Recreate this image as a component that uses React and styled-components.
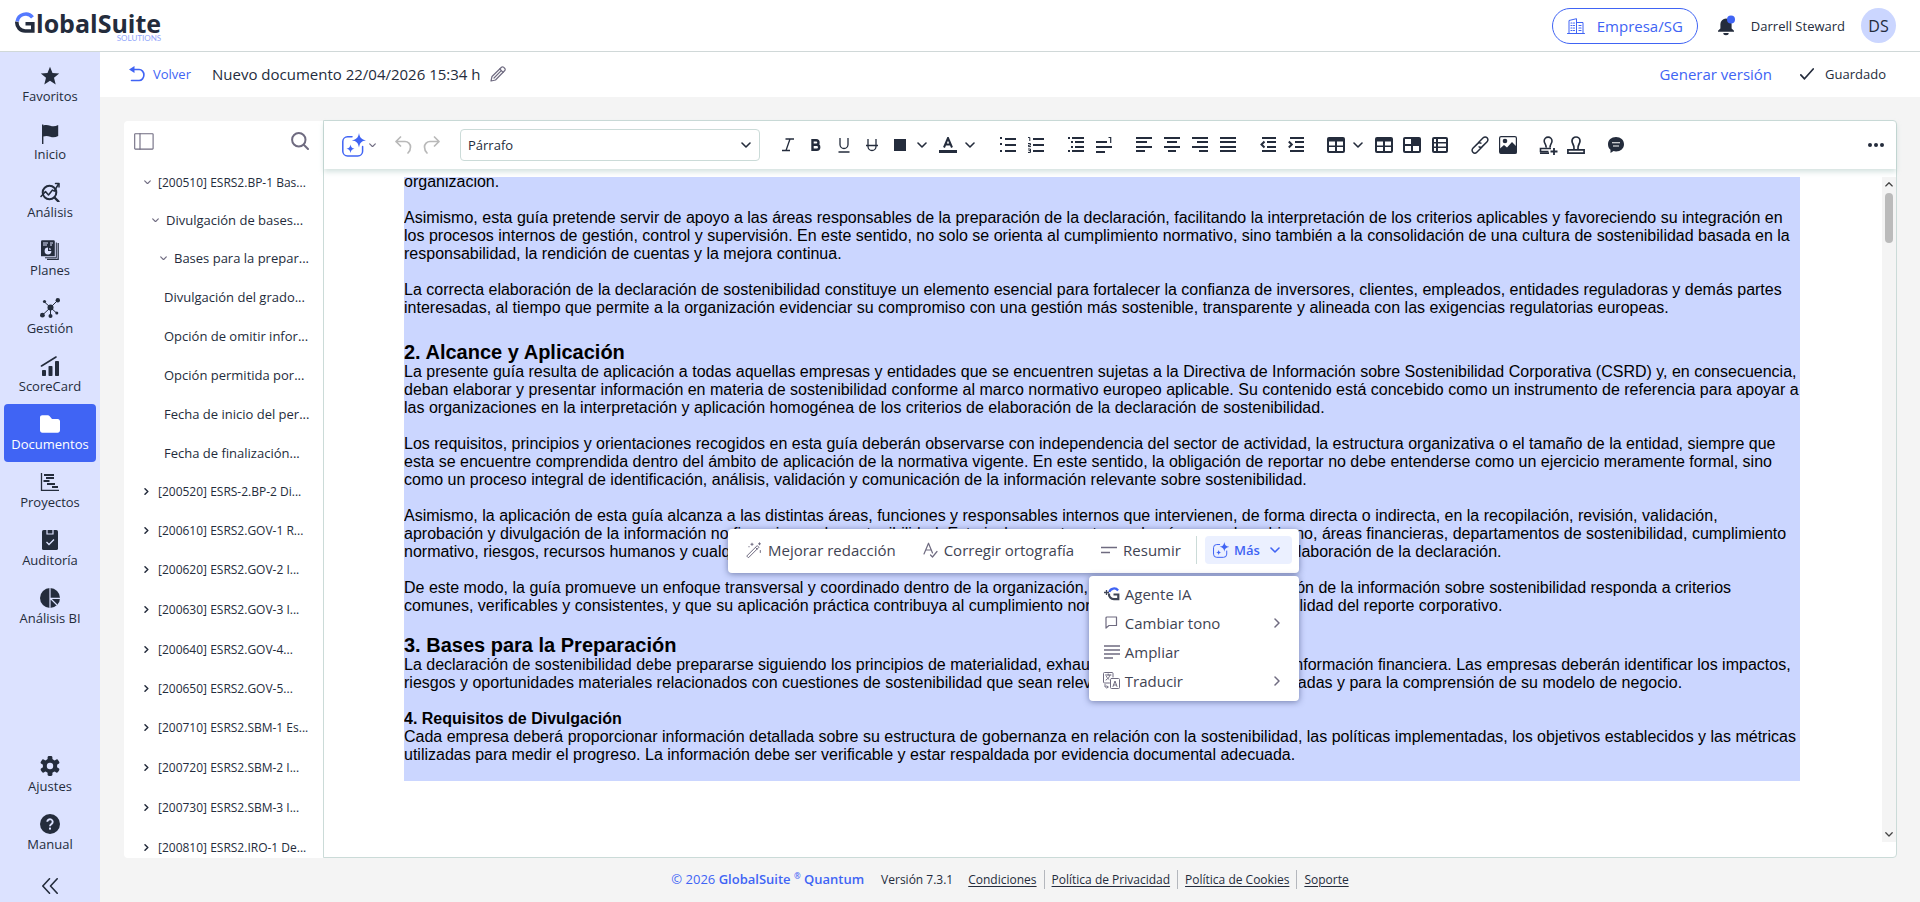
import React from "react";
import styled, { createGlobalStyle, css } from "styled-components";

const ink = "#242c3c";
const blue = "#4064f4";
const muted = "#6f6b80";
const line = "#cbdbd8";

const GlobalStyle = createGlobalStyle`
  * {
    box-sizing: border-box;
  }
  body {
    margin: 0;
    font-family: "Open Sans", sans-serif;
    font-size: 13px;
    color: ${ink};
    background: #f4f4f4;
  }
  button, select {
    font: inherit;
    color: inherit;
    margin: 0;
    padding: 0;
    border: 0;
    background: none;
    cursor: pointer;
  }
  a {
    color: inherit;
    text-decoration: none;
  }
  svg {
    display: block;
    flex: none;
  }
`;

// every glyph: [width, height, drawing]
const bars = (list, h = 2) =>
  list.map(([x, y, w]) => (
    <rect key={`${x}-${y}`} x={x} y={y} width={w} height={h} fill="currentColor" />
  ));

const stroke = {
  fill: "none",
  stroke: "currentColor",
  strokeLinecap: "round",
  strokeLinejoin: "round"
};

const glyphs = {
  star: [
    20,
    20,
    <path
      fill="currentColor"
      d="M10 .8l2.500 6.300 6.700.4-5.200 4.300 1.700 6.600L10 14.800l-5.700 3.600L6 11.800.8 7.500l6.700-.4z"
    />
  ],
  flag: [
    20,
    20,
    <path
      fill="currentColor"
      d="M2 .4h1.400v1c2.200-.8 4.400-.6 6.800.3 2.500.9 5 .9 8-.6v11c-3 1.500-5.500 1.500-8 .6-2.400-.9-4.600-1-6.800-.2v7.500H2z"
    />
  ],
  analysis: [
    20,
    20,
    <g {...stroke} strokeWidth="2">
      <circle cx="9.500" cy="10.500" r="6.800" />
      <path d="M14.500 15.500l4 4" strokeWidth="2.400" />
      <path d="M1 14.500l4.500-5 3 3.500 4-5 1.800 1.200L18.500 2" strokeWidth="1.500" />
      <path d="M15.500 1.500h3.500V5" strokeWidth="1.500" />
    </g>
  ],
  plans: [
    20,
    20,
    <g>
      <path fill="currentColor" d="M1 1.500Q1 .3 2.200.3h11.500q1.100 0 1.100 1.200v14.700H1z" />
      <path d="M16.300 2.500v15.300H5" fill="none" stroke="currentColor" strokeWidth="1" />
      <path d="M18.200 3v16.300H7" fill="none" stroke="currentColor" strokeWidth="1.200" />
      <path d="M3 3h5M3 5h4M10 3h3M10 5h2" stroke="#dce2ff" strokeWidth="1" />
      <circle cx="8" cy="11" r="3.400" fill="#dce2ff" />
      <path d="M8 11V7h4.500v4z" fill="currentColor" />
      <path d="M9.200 9.800V8a2.200 2.200 0 0 1 1.900 1.800z" fill="#dce2ff" />
    </g>
  ],
  network: [
    20,
    20,
    <g fill="currentColor">
      <path d="M10.500 9.500L4.500 4M10.500 9.500L17.500 2.500M10.500 9.500L2.500 17M10.500 9.500V18M10.500 9.500l6 5.500" stroke="currentColor" strokeWidth="1" />
      <circle cx="10.500" cy="9.500" r="3" />
      <circle cx="4.500" cy="3.500" r="1.600" />
      <circle cx="17.800" cy="2.300" r="2.200" />
      <circle cx="2.400" cy="17.200" r="2.400" />
      <circle cx="10.500" cy="18" r="2" />
      <circle cx="16.800" cy="15" r="1.500" />
    </g>
  ],
  score: [
    20,
    20,
    <g fill="currentColor">
      <rect x="2" y="14" width="4" height="6" rx=".8" />
      <rect x="8.500" y="10" width="4" height="10" rx=".8" />
      <rect x="15" y="5" width="4" height="15" rx=".8" />
      <path d="M1.500 10L16 1" stroke="currentColor" strokeWidth="1.600" strokeLinecap="round" />
    </g>
  ],
  folder: [
    20,
    20,
    <path
      fill="currentColor"
      d="M2.200 1.200h5.600c.8 0 1.400.4 1.900 1L12 5h5.800C19 5 20 6 20 7.300v8.900c0 1.400-1 2.500-2.300 2.500H2.300C1 18.700 0 17.600 0 16.200V3.400c0-1.300 1-2.200 2.200-2.200z"
    />
  ],
  gantt: [
    20,
    20,
    <g fill="currentColor">
      <path d="M1.500 1v17.300H19" fill="none" stroke="currentColor" strokeWidth="1.300" />
      <rect x="4" y="2" width="10" height="2" />
      <rect x="6" y="5" width="8" height="2" />
      <rect x="3.500" y="8" width="6" height="2" />
      <rect x="7" y="11" width="8" height="2" />
      <rect x="12" y="14" width="6" height="2" />
    </g>
  ],
  audit: [
    20,
    20,
    <g>
      <rect x="2" y="0" width="16" height="20" rx="1.600" fill="currentColor" />
      <path d="M7 0v4h6V0" fill="none" stroke="#dce2ff" strokeWidth="1.200" />
      <path d="M6.500 12l2.500 2.500 5-5" fill="none" stroke="#dce2ff" strokeWidth="1.300" />
    </g>
  ],
  pie: [
    20,
    20,
    <g>
      <circle cx="10" cy="10" r="10" fill="currentColor" />
      <path d="M10 0v20M10 10.300h10M10 10l7 7" stroke="#dce2ff" strokeWidth="1.200" />
    </g>
  ],
  gear: [
    20,
    20,
    <g>
      <circle cx="10" cy="10" r="7.200" fill="currentColor" />
      {[0, 60, 120, 180, 240, 300].map(a => (
        <rect key={a} x="7.600" y="0" width="4.800" height="6" rx="1.400" fill="currentColor" transform={`rotate(${a} 10 10)`} />
      ))}
      <circle cx="10" cy="10" r="3.200" fill="#dce2ff" />
    </g>
  ],
  help: [
    20,
    20,
    <g>
      <circle cx="10" cy="10" r="10" fill="currentColor" />
      <path d="M7.300 7.800a2.700 2.600 0 1 1 4.300 2.100c-1 .8-1.600 1.200-1.600 2.300" fill="none" stroke="#dce2ff" strokeWidth="1.900" />
      <rect x="9" y="13.600" width="2" height="2" fill="#dce2ff" />
    </g>
  ],
  collapse: [16, 16, <path {...stroke} strokeWidth="1.600" d="M7.500.8L.8 8l6.700 7.200M15.200.8L8.500 8l6.700 7.200" />],
  building: [
    18,
    16,
    <g {...stroke} strokeWidth="1">
      <path d="M.5 15.500h17M2 15.500V2.500l7.500-1.800v14.800M9.500 4.500h6.500v11" />
      <path d="M4 5h1M6.500 5h1M4 7.500h1M6.500 7.500h1M4 10h1M6.500 10h1M4 12.500h1M6.500 12.500h1M12 7.500h2M12 10h2M12 12.500h2" strokeWidth="1.200" />
    </g>
  ],
  bell: [
    18,
    21,
    <g>
      <path fill={ink} d="M8 3.500a5.600 5.600 0 0 1 5.600 5.600v4.400l2.400 2.200v1.100H0v-1.100l2.400-2.200V9.100A5.600 5.600 0 0 1 8 3.500z" />
      <path fill={ink} d="M5.300 18h5.400a2.700 2.200 0 0 1-5.400 0z" />
      <circle cx="13" cy="4.500" r="4" fill={blue} />
    </g>
  ],
  back: [
    16,
    16,
    <g>
      <path {...stroke} strokeWidth="1.600" d="M3 3.500h7.200a4.700 5.500 0 0 1 0 11H2.500" />
      <path fill="currentColor" d="M0 3.500L5.500 0v7z" />
    </g>
  ],
  pencil: [
    16,
    16,
    <g {...stroke} strokeWidth="1.200">
      <path d="M1 15l1-4.500L11.500 1.200a1.400 1.400 0 0 1 2 0l1.300 1.300a1.400 1.400 0 0 1 0 2L5.500 14z" />
      <path d="M9.800 3l3.300 3.300M11 4.800L4 12" />
    </g>
  ],
  check: [14, 12, <path {...stroke} strokeWidth="1.700" d="M.8 6.800l3.700 4L13.200 1" />],
  panel: [
    20,
    17,
    <g {...stroke} strokeWidth="1.100">
      <rect x=".7" y=".7" width="18.400" height="15.400" rx=".6" />
      <path d="M6 .7v15.400" />
    </g>
  ],
  search: [
    18,
    18,
    <g {...stroke} strokeWidth="2">
      <circle cx="7.800" cy="7.800" r="6.700" />
      <path d="M13 13l4 4" />
    </g>
  ],
  ai: [
    24,
    24,
    <g>
      <path {...stroke} strokeWidth="1.500" d="M10 3.800H5.600A4.800 4.800 0 0 0 .8 8.600v9.600A4.800 4.800 0 0 0 5.600 23h10.200a4.800 4.800 0 0 0 4.800-4.800V13.500" />
      <path fill="currentColor" d="M17 0c.9 4.800 2.400 6.400 7.200 7.300-4.800.9-6.300 2.500-7.200 7.300-.9-4.800-2.400-6.400-7.200-7.300C14.600 6.400 16.100 4.800 17 0z" />
      <path fill="currentColor" d="M8.500 11.500c.5 2.800 1.400 3.700 4 4.200-2.600.5-3.500 1.400-4 4.200-.5-2.800-1.400-3.700-4-4.200 2.600-.5 3.500-1.400 4-4.200z" />
    </g>
  ],
  down: [10, 6, <path {...stroke} strokeWidth="1.600" d="M1 1l4 4 4-4" />],
  downSmall: [6, 4, <path {...stroke} strokeWidth="1" d="M.6.8L3 3.200 5.400.8" />],
  right: [6, 10, <path {...stroke} strokeWidth="1.500" d="M1 1l4 4-4 4" />],
  rightSmall: [5, 7, <path {...stroke} strokeWidth="1.500" d="M1 .8l2.800 2.700L1 6.200" />],
  undo: [17, 18, <path {...stroke} strokeWidth="1.700" d="M5.500 1L1 5.500 5.500 10M1 5.500h9a5.500 5.500 0 0 1 5.500 5.500c0 3-1 4.500-2.500 6" />],
  redo: [17, 18, <path {...stroke} strokeWidth="1.700" d="M11.500 1L16 5.500 11.500 10M16 5.500H7A5.500 5.500 0 0 0 1.500 11c0 3 1 4.500 2.500 6" />],
  italic: [12, 14, <path d="M3.500 1H12M0 12.500h8M8 1L4 12.500" fill="none" stroke="currentColor" strokeWidth="1.300" />],
  bold: [10, 12, <path d="M1.500 1.200h3.700a2.300 2.300 0 0 1 0 4.600H1.500zM1.500 5.800h4.200a2.500 2.500 0 0 1 0 5H1.500z" fill="none" stroke="currentColor" strokeWidth="2.400" />],
  underline: [12, 15, <path d="M2 0v6.500a4 4 0 0 0 8 0V0M.5 14h11" fill="none" stroke="currentColor" strokeWidth="1.300" />],
  strike: [12, 13, <path d="M2 0v7.500a4 4 0 0 0 8 0V0M0 6.500h12" fill="none" stroke="currentColor" strokeWidth="1.300" />],
  fill: [12, 12, <rect width="12" height="12" fill="currentColor" />],
  color: [
    18,
    16,
    <g>
      <path d="M5 10.500L9 1l4 9.500M6.500 7.500h5" fill="none" stroke="currentColor" strokeWidth="2" />
      <rect y="13" width="18" height="3" fill="currentColor" />
    </g>
  ],
  bullets: [16, 16, bars([[0, 0, 2], [0, 6, 2], [0, 13, 2], [5, 1, 11], [5, 7, 11], [5, 13, 11]])],
  numbers: [
    16,
    16,
    <g>
      {bars([[5, 1, 11], [5, 7, 11], [5, 13, 11]])}
      <path d="M0 .5h1.800V4M0 6.500h2.500v1.600H.5v1.500H3M0 12h2.500v3.500H0M.5 13.700h2" fill="none" stroke="currentColor" strokeWidth="1" />
    </g>
  ],
  indentList: [16, 16, bars([[0, 0, 2], [4, 0, 12], [3, 4, 2], [7, 4, 9], [3, 9, 2], [7, 9, 9], [0, 13, 2], [4, 13, 12]])],
  lineHeight: [
    16,
    16,
    <g>
      {bars([[0, 4, 11], [0, 9, 16], [0, 14, 9]])}
      <path d="M12.500.5h2.200V6" fill="none" stroke="currentColor" strokeWidth="1.200" />
    </g>
  ],
  left: [16, 16, bars([[0, 0, 16], [0, 4, 11], [0, 9, 16], [0, 13, 9]])],
  center: [16, 16, bars([[0, 0, 16], [3, 4, 10], [0, 9, 16], [4, 13, 8]])],
  alignRight: [16, 16, bars([[0, 0, 16], [5, 4, 11], [0, 9, 16], [7, 13, 9]])],
  justify: [16, 16, bars([[0, 0, 16], [0, 4, 16], [0, 9, 16], [0, 13, 16]])],
  outdent: [
    16,
    16,
    <g>
      {bars([[2, 0, 14], [7, 4, 9], [7, 9, 9], [2, 13, 14]])}
      <path d="M4.500 4.500L1.500 7.500l3 3" fill="none" stroke="currentColor" strokeWidth="2" />
    </g>
  ],
  indent: [
    16,
    16,
    <g>
      {bars([[2, 0, 14], [7, 4, 9], [7, 9, 9], [2, 13, 14]])}
      <path d="M.8 4.500l3 3-3 3" fill="none" stroke="currentColor" strokeWidth="2" />
    </g>
  ],
  table: [
    18,
    16,
    <g>
      <rect width="18" height="16" rx="2" fill="currentColor" />
      <path fill="#fff" d="M2 4.500h6v4H2zM10 4.500h6v4h-6zM2 10h6v4H2zM10 10h6v4h-6z" />
    </g>
  ],
  cell: [
    18,
    16,
    <g>
      <rect width="18" height="16" rx="2" fill="currentColor" />
      <path fill="#fff" d="M2 2h6v5H2zM2 9h6v5H2zM10 9h6v5h-6z" />
    </g>
  ],
  rows: [
    16,
    16,
    <g>
      <rect width="16" height="16" rx="2" fill="currentColor" />
      <path fill="#fff" d="M2 2h2v3H2zM6 2h8v3H6zM2 6.500h2v3H2zM6 6.500h8v3H6zM2 11h2v3H2zM6 11h8v3H6z" />
    </g>
  ],
  link: [
    18,
    18,
    <g {...stroke} strokeWidth="1.500">
      <path d="M7.500 6.500l4.700-4.700a2.700 2.700 0 0 1 3.900 3.900l-4.700 4.700a2.700 2.700 0 0 1-3.300.5" />
      <path d="M10.500 11.500l-4.700 4.700a2.700 2.700 0 0 1-3.900-3.900l4.700-4.700a2.700 2.700 0 0 1 3.300-.5" />
    </g>
  ],
  image: [
    18,
    18,
    <g>
      <rect x=".6" y=".6" width="16.800" height="16.800" rx="1.500" fill="none" stroke="currentColor" strokeWidth="1.200" />
      <circle cx="6" cy="5" r="2.300" fill="currentColor" />
      <path fill="currentColor" d="M1 12.500l4-3.500 3 2.500L13 6l4.500 4.500V17.500H1z" />
    </g>
  ],
  stampAdd: [
    19,
    19,
    <g fill="none" stroke="currentColor" strokeWidth="1.600">
      <path d="M7 11.500c.5-3-1.800-3.700-1.800-6.500a3.900 3.900 0 0 1 7.800 0c0 2.800-2.300 3.500-1.800 6.500M12 12.500H1.500v3h8" />
      <path d="M1 17.200h9M15 12v7M11.500 15.500h7" strokeWidth="1.800" />
    </g>
  ],
  stamp: [
    18,
    18,
    <g fill="none" stroke="currentColor" strokeWidth="1.700">
      <path d="M7 13c.5-4.500-2-5-2-8a4 4 0 0 1 8 0c0 3-2.500 3.500-2 8" />
      <path d="M.9 13.800h16.200v3.300H.9z" />
    </g>
  ],
  comment: [
    16,
    16,
    <g>
      <path fill="currentColor" d="M8 0c4.600 0 8 3 8 7.200s-3.400 7.200-8 7.200c-.9 0-1.700-.1-2.500-.3L2.500 16v-3.200C.9 11.500 0 9.600 0 7.200 0 3 3.400 0 8 0z" />
      <path d="M4 5.800h8M5 9h6" stroke="#fff" strokeWidth="1.100" />
    </g>
  ],
  more: [
    16,
    4,
    <g fill="currentColor">
      <circle cx="2" cy="2" r="2" />
      <circle cx="8" cy="2" r="2" />
      <circle cx="14" cy="2" r="2" />
    </g>
  ],
  wand: [
    16,
    16,
    <g {...stroke} strokeWidth="1">
      <path d="M1 13.800L11.200 3.600l1.700 1.700L2.700 15.500zM9.400 5.400l1.700 1.700" />
      <path d="M6 1.200v2.200M4.900 2.300h2.200M13.500.8v2M12.500 1.800h2M14.300 8.500v2M3 4.500v.4" />
    </g>
  ],
  spell: [
    15,
    16,
    <g {...stroke} strokeWidth="1.200">
      <path d="M1 12L5.500 1.200 9.500 11M2.700 8h5.800M7.500 13l2 2L14 9.500" />
    </g>
  ],
  short: [
    16,
    8,
    <path d="M0 1.500h16M0 6.500h9" stroke="currentColor" strokeWidth="1.400" />
  ],
  agent: [
    16,
    14,
    <g fill="none" strokeWidth="2.200">
      <path d="M5.300 5a5 5 0 0 1 8.800-1.500" stroke={blue} />
      <path d="M5 6.500a5 5 0 0 0 5 5.700h4.300V7.500H9.500" stroke="#404657" />
      <path d="M2.500 3v5M0 5.500h5" strokeWidth="1.300" stroke="#404657" />
    </g>
  ],
  bubble: [13, 13, <path {...stroke} strokeWidth="1.200" d="M2 1h9.500v8.500H4L1 12V2a1 1 0 0 1 1-1z" />],
  lines: [
    16,
    14,
    <path d="M0 1h16M0 5h16M0 9h16M0 13h9" stroke="currentColor" strokeWidth="1.400" />
  ],
  translate: [
    17,
    17,
    <g {...stroke} strokeWidth="1">
      <path d="M6.500 11H1.500a1 1 0 0 1-1-1V1.500a1 1 0 0 1 1-1H9a1 1 0 0 1 1 1V5" />
      <rect x="7.500" y="6.500" width="9" height="10" rx="1" />
      <path d="M2.500 3h5.500M5.200 2v1M7 3c-.5 2-2 4-4 5M3.500 4.500C4.200 6 5 6.800 6 7.500M10 14.500l2-5.500 2 5.500M10.700 13h2.600M2 12.500v2.500h3M4 13.800L5.200 15 4 16.200" />
    </g>
  ]
};

const Icon = ({ name, size }) => {
  const [w, h, drawing] = glyphs[name];
  return (
    <svg width={size || w} height={size ? (size * h) / w : h} viewBox={`0 0 ${w} ${h}`} aria-hidden="true">
      {drawing}
    </svg>
  );
};

const mainMenu = [
  ["star", "Favoritos"],
  ["flag", "Inicio"],
  ["analysis", "Análisis"],
  ["plans", "Planes"],
  ["network", "Gestión"],
  ["score", "ScoreCard"],
  ["folder", "Documentos", true],
  ["gantt", "Proyectos"],
  ["audit", "Auditoría"],
  ["pie", "Análisis BI"]
];

const bottomMenu = [["gear", "Ajustes"], ["help", "Manual"]];

const tree = [
  { kind: "open", level: 0, text: "[200510] ESRS2.BP-1 Bas..." },
  { kind: "open", level: 1, text: "Divulgación de bases..." },
  { kind: "open", level: 2, text: "Bases para la prepar..." },
  { kind: "leaf", level: 3, text: "Divulgación del grado..." },
  { kind: "leaf", level: 3, text: "Opción de omitir infor..." },
  { kind: "leaf", level: 3, text: "Opción permitida por..." },
  { kind: "leaf", level: 3, text: "Fecha de inicio del per..." },
  { kind: "leaf", level: 3, text: "Fecha de finalización..." },
  { kind: "closed", level: 0, text: "[200520] ESRS-2.BP-2 Di..." },
  { kind: "closed", level: 0, text: "[200610] ESRS2.GOV-1 R..." },
  { kind: "closed", level: 0, text: "[200620] ESRS2.GOV-2 I..." },
  { kind: "closed", level: 0, tall: true, text: "[200630] ESRS2.GOV-3 I..." },
  { kind: "closed", level: 0, tall: true, text: "[200640] ESRS2.GOV-4..." },
  { kind: "closed", level: 0, text: "[200650] ESRS2.GOV-5..." },
  { kind: "closed", level: 0, text: "[200710] ESRS2.SBM-1 Es..." },
  { kind: "closed", level: 0, tall: true, text: "[200720] ESRS2.SBM-2 I..." },
  { kind: "closed", level: 0, tall: true, text: "[200730] ESRS2.SBM-3 I..." },
  { kind: "closed", level: 0, tall: true, text: "[200810] ESRS2.IRO-1 De..." }
];

// [icon, label, has drop-down arrow]
const toolGroups = [
  [
    ["italic", "Cursiva"],
    ["bold", "Negrita"],
    ["underline", "Subrayado"],
    ["strike", "Tachado"],
    ["fill", "Color de fondo", true],
    ["color", "Color de texto", true]
  ],
  [["bullets", "Viñetas"], ["numbers", "Numeración"]],
  [["indentList", "Lista multinivel"], ["lineHeight", "Interlineado"]],
  [
    ["left", "Alinear a la izquierda"],
    ["center", "Centrar"],
    ["alignRight", "Alinear a la derecha"],
    ["justify", "Justificar"]
  ],
  [["outdent", "Reducir sangría"], ["indent", "Aumentar sangría"]],
  [
    ["table", "Tabla", true],
    ["table", "Propiedades de tabla"],
    ["cell", "Celda"],
    ["rows", "Filas"]
  ],
  [["link", "Enlace"], ["image", "Imagen"]],
  [["stampAdd", "Añadir sello"], ["stamp", "Sello"]],
  [["comment", "Comentario"]]
];

const moreMenu = [
  ["agent", "Agente IA"],
  ["bubble", "Cambiar tono", true],
  ["lines", "Ampliar"],
  ["translate", "Traducir", true]
];

const RailEntry = ({ item: [icon, label, active] }) => (
  <RailLink href="#" $active={active} aria-current={active ? "page" : undefined}>
    <Icon name={icon} />
    {label}
  </RailLink>
);

const Logo = () => (
  <LogoLink href="#" aria-label="GlobalSuite Solutions">
    <svg width="21" height="22" viewBox="0 0 21 22" aria-hidden="true">
      <g fill="none" strokeWidth="3.600">
        <path d="M2.200 9.500A8.600 8.600 0 0 1 17.500 5.400" stroke="#5479ff" />
        <path d="M1.900 9.800a8.300 8.300 0 0 0 8.300 9.200h7.600v-7.200h-7.300" stroke={ink} />
      </g>
    </svg>
    <LogoText>
      lobalSuite
      <small>SOLUTIONS</small>
    </LogoText>
  </LogoLink>
);

const Document = () => (
  <Page>
    <p>organización.</p>
    <p>
      Asimismo, esta guía pretende servir de apoyo a las áreas responsables de la preparación de la declaración,
      facilitando la interpretación de los criterios aplicables y favoreciendo su integración en los procesos internos
      de gestión, control y supervisión. En este sentido, no solo se orienta al cumplimiento normativo, sino también a
      la consolidación de una cultura de sostenibilidad basada en la responsabilidad, la rendición de cuentas y la
      mejora continua.
    </p>
    <p>
      La correcta elaboración de la declaración de sostenibilidad constituye un elemento esencial para fortalecer la
      confianza de inversores, clientes, empleados, entidades reguladoras y demás partes interesadas, al tiempo que
      permite a la organización evidenciar su compromiso con una gestión más sostenible, transparente y alineada con
      las exigencias regulatorias europeas.
    </p>
    <Heading $gap={24}>2. Alcance y Aplicación</Heading>
    <p>
      La presente guía resulta de aplicación a todas aquellas empresas y entidades que se encuentren sujetas a la
      Directiva de Información sobre Sostenibilidad Corporativa (CSRD) y, en consecuencia, deban elaborar y presentar
      información en materia de sostenibilidad conforme al marco normativo europeo aplicable. Su contenido está
      concebido como un instrumento de referencia para apoyar a las organizaciones en la interpretación y aplicación
      homogénea de los criterios de elaboración de la declaración de sostenibilidad.
    </p>
    <p>
      Los requisitos, principios y orientaciones recogidos en esta guía deberán observarse con independencia del sector
      de actividad, la estructura organizativa o el tamaño de la entidad, siempre que esta se encuentre comprendida
      dentro del ámbito de aplicación de la normativa vigente. En este sentido, la obligación de reportar no debe
      entenderse como un ejercicio meramente formal, sino como un proceso integral de identificación, análisis,
      validación y comunicación de la información relevante sobre sostenibilidad.
    </p>
    <p>
      Asimismo, la aplicación de esta guía alcanza a las distintas áreas, funciones y responsables internos que
      intervienen, de forma directa o indirecta, en la recopilación, revisión, validación, aprobación y divulgación de
      la información no financiera y de sostenibilidad. Esto incluye, entre otros, a los órganos de gobierno, áreas
      financieras, departamentos de sostenibilidad, cumplimiento normativo, riesgos, recursos humanos y cualquier otra
      unidad organizativa que participe de manera directa en el proceso de elaboración de la declaración.
    </p>
    <p>
      De este modo, la guía promueve un enfoque transversal y coordinado dentro de la organización, asegurando que la
      preparación de la información sobre sostenibilidad responda a criterios comunes, verificables y consistentes, y
      que su aplicación práctica contribuya al cumplimiento normativo y a la calidad y credibilidad del reporte
      corporativo.
    </p>
    <Heading $gap={19}>3. Bases para la Preparación</Heading>
    <p>
      La declaración de sostenibilidad debe prepararse siguiendo los principios de materialidad, exhaustividad y
      coherencia con la información financiera. Las empresas deberán identificar los impactos, riesgos y oportunidades
      materiales relacionados con cuestiones de sostenibilidad que sean relevantes para sus partes interesadas y para
      la comprensión de su modelo de negocio.
    </p>
    <SubHeading>4. Requisitos de Divulgación</SubHeading>
    <p>
      Cada empresa deberá proporcionar información detallada sobre su estructura de gobernanza en relación con la
      sostenibilidad, las políticas implementadas, los objetivos establecidos y las métricas utilizadas para medir el
      progreso. La información debe ser verificable y estar respaldada por evidencia documental adecuada.
    </p>
  </Page>
);

export default function App() {
  return (
    <Shell>
      <GlobalStyle />
      <Header>
        <Logo />
        <HeaderRight>
          <CompanyButton type="button">
            <Icon name="building" />
            Empresa/SG
          </CompanyButton>
          <button type="button" aria-label="Notificaciones">
            <Icon name="bell" />
          </button>
          <UserName>Darrell Steward</UserName>
          <Avatar>DS</Avatar>
        </HeaderRight>
      </Header>
      <Body>
        <Rail>
          {mainMenu.map(m => (
            <RailEntry key={m[1]} item={m} />
          ))}
          <RailSpacer />
          {bottomMenu.map(m => (
            <RailEntry key={m[1]} item={m} />
          ))}
          <CollapseButton type="button" aria-label="Contraer menú">
            <Icon name="collapse" />
          </CollapseButton>
        </Rail>
        <Main>
          <TitleBar>
            <BackLink href="#">
              <Icon name="back" />
              Volver
            </BackLink>
            <h1>Nuevo documento 22/04/2026 15:34 h</h1>
            <EditButton type="button" aria-label="Editar nombre">
              <Icon name="pencil" />
            </EditButton>
            <VersionButton type="button">Generar versión</VersionButton>
            <Saved>
              <Icon name="check" />
              Guardado
            </Saved>
          </TitleBar>
          <Workspace>
            <TreePanel>
              <TreeHead>
                <button type="button" aria-label="Ocultar panel">
                  <Icon name="panel" />
                </button>
                <button type="button" aria-label="Buscar">
                  <Icon name="search" />
                </button>
              </TreeHead>
              <TreeList>
                {tree.map(n => (
                  <li key={n.text}>
                    <TreeRow type="button" $kind={n.kind} $level={n.level} $tall={n.tall}>
                      {n.kind === "open" && <Icon name="downSmall" size={7} />}
                      {n.kind === "closed" && <Icon name="rightSmall" />}
                      <span>{n.text}</span>
                    </TreeRow>
                  </li>
                ))}
              </TreeList>
            </TreePanel>
            <Editor>
              <Toolbar>
                <AiButton type="button" aria-label="Asistente IA">
                  <Icon name="ai" />
                  <Icon name="downSmall" size={7} />
                </AiButton>
                <Tools $dim>
                  <Tool type="button" aria-label="Deshacer">
                    <Icon name="undo" />
                  </Tool>
                  <Tool type="button" aria-label="Rehacer">
                    <Icon name="redo" />
                  </Tool>
                </Tools>
                <FormatField>
                  <select aria-label="Formato" defaultValue="p">
                    <option value="p">Párrafo</option>
                    <option value="h">Título</option>
                  </select>
                  <Icon name="down" />
                </FormatField>
                {toolGroups.map((group, i) => (
                  <Tools key={i}>
                    {group.map(([icon, label, menu]) => (
                      <Tool key={label} type="button" aria-label={label} $menu={menu}>
                        <Icon name={icon} />
                        {menu && <Icon name="down" />}
                      </Tool>
                    ))}
                  </Tools>
                ))}
                <MoreButton type="button" aria-label="Más opciones">
                  <Icon name="more" />
                </MoreButton>
              </Toolbar>
              <Canvas>
                <Document />
                <ScrollTrack aria-hidden="true">
                  <ArrowUp>
                    <Icon name="down" size={8} />
                  </ArrowUp>
                  <Thumb />
                  <Icon name="down" size={8} />
                </ScrollTrack>
                <AiMenus>
                  <FloatBar>
                    <FloatButton type="button">
                      <Icon name="wand" />
                      Mejorar redacción
                    </FloatButton>
                    <FloatButton type="button">
                      <Icon name="spell" />
                      Corregir ortografía
                    </FloatButton>
                    <FloatButton type="button">
                      <Icon name="short" />
                      Resumir
                    </FloatButton>
                    <Divider />
                    <AiMore type="button">
                      <Icon name="ai" size={16} />
                      Más
                      <Icon name="down" />
                    </AiMore>
                  </FloatBar>
                  <DropMenu>
                    {moreMenu.map(([icon, label, sub]) => (
                      <DropItem key={label} type="button">
                        <DropIcon>
                          <Icon name={icon} />
                        </DropIcon>
                        {label}
                        {sub && <Icon name="right" />}
                      </DropItem>
                    ))}
                  </DropMenu>
                </AiMenus>
              </Canvas>
            </Editor>
          </Workspace>
          <Footer>
            <Brand>
              © 2026 <strong>GlobalSuite <sup>®</sup> Quantum</strong>
            </Brand>
            <Version>Versión 7.3.1</Version>
            <FooterLinks>
              <a href="#">Condiciones</a>
              <a href="#">Política de Privacidad</a>
              <a href="#">Política de Cookies</a>
              <a href="#">Soporte</a>
            </FooterLinks>
          </Footer>
        </Main>
      </Body>
    </Shell>
  );
}

const Shell = styled.div`
  display: flex;
  flex-direction: column;
  height: 100vh;
`;

const Header = styled.header`
  display: flex;
  align-items: center;
  justify-content: space-between;
  flex: none;
  height: 52px;
  padding: 0 24px 0 15px;
  background: #fff;
  border-bottom: 1px solid #d0d8d8;
`;

const LogoLink = styled.a`
  display: flex;
  height: 28px;
  color: ${ink};
`;

const LogoText = styled.span`
  display: flex;
  flex-direction: column;
  align-items: flex-end;
  font-size: 25px;
  font-weight: 700;
  line-height: 22px;

  small {
    font-family: Lato, sans-serif;
    font-size: 8px;
    font-weight: 400;
    line-height: 8px;
    color: #8fa6fb;
  }
`;

const HeaderRight = styled.div`
  display: flex;
  align-items: center;
`;

const CompanyButton = styled.button`
  && {
    display: flex;
    align-items: center;
    gap: 12px;
    height: 36px;
    margin-right: 20px;
    padding: 0 14px;
    border: 1px solid ${blue};
    border-radius: 18px;
    font-size: 15px;
    color: ${blue};
  }
`;

const UserName = styled.span`
  margin: 0 16px 0 15px;
`;

const Avatar = styled.span`
  display: flex;
  align-items: center;
  justify-content: center;
  width: 35px;
  height: 35px;
  border-radius: 50%;
  background: #cbd6ff;
  font-size: 16px;
`;

const Body = styled.div`
  display: flex;
  flex: 1;
  min-height: 0;
`;

const Rail = styled.nav`
  display: flex;
  flex-direction: column;
  flex: none;
  width: 100px;
  padding: 4px 4px 0;
  background: #dce2ff;
`;

const RailLink = styled.a`
  display: flex;
  flex-direction: column;
  align-items: center;
  gap: 1px;
  height: 58px;
  padding-top: 10px;
  border-radius: 4px;
  line-height: 18px;
  ${p => p.$active && css`
    background: ${blue};
    color: #fff;
  `}
`;

const RailSpacer = styled.div`
  flex: 1;
`;

const CollapseButton = styled.button`
  && {
    display: flex;
    justify-content: center;
    height: 40px;
    padding-top: 16px;
  }
`;

const Main = styled.main`
  display: flex;
  flex-direction: column;
  flex: 1;
  min-width: 0;
`;

const TitleBar = styled.div`
  display: flex;
  align-items: center;
  flex: none;
  height: 45px;
  padding: 0 34px 2px 29px;
  background: #fff;

  h1 {
    margin: 0 9px 0 21px;
    font-size: 15px;
    font-weight: 500;
  }
`;

const BackLink = styled.a`
  display: flex;
  align-items: center;
  gap: 8px;
  font-weight: 500;
  color: ${blue};
`;

const EditButton = styled.button`
  && {
    color: ${muted};
  }
`;

const VersionButton = styled.button`
  && {
    margin: 0 28px 0 auto;
    font-size: 15px;
    font-weight: 500;
    color: ${blue};
  }
`;

const Saved = styled.span`
  display: flex;
  align-items: center;
  gap: 11px;
`;

const Workspace = styled.div`
  display: flex;
  flex: 1;
  min-height: 0;
  padding: 23px 23px 0 24px;
`;

const TreePanel = styled.aside`
  display: flex;
  flex-direction: column;
  flex: none;
  width: 199px;
  margin-top: 1px;
  border-radius: 4px 0 0 4px;
  background: #fff;
  overflow: hidden;
`;

const TreeHead = styled.div`
  display: flex;
  align-items: center;
  justify-content: space-between;
  flex: none;
  height: 40px;
  padding: 0 14px 0 10px;

  button {
    color: ${muted};
  }
`;

const TreeList = styled.ul`
  flex: 1;
  min-height: 0;
  margin: 0;
  padding: 2px 0 0;
  list-style: none;
  overflow: hidden;
`;

const rowHeight = { open: 38, leaf: 39, closed: 39 };

const TreeRow = styled.button`
  && {
    display: flex;
    align-items: center;
    gap: ${p => (p.$kind === "closed" ? 9 : 7)}px;
    width: 100%;
    height: ${p => (p.$tall ? 40 : rowHeight[p.$kind])}px;
    padding-left: ${p => (p.$kind === "leaf" ? 40 : 20 + 8 * p.$level)}px;
    font-size: ${p => (p.$level ? 13 : 12)}px;
    white-space: nowrap;
  }

  svg {
    color: ${p => (p.$kind === "open" ? muted : ink)};
  }
`;

const Editor = styled.section`
  display: flex;
  flex-direction: column;
  flex: 1;
  min-width: 0;
  border: 1px solid ${line};
  border-radius: 0 4px 4px 0;
  background: #fff;
`;

const Toolbar = styled.div`
  display: flex;
  align-items: center;
  flex: none;
  gap: 12px;
  height: 48px;
  margin-bottom: 8px;
  padding: 0 12px 0 18px;
  box-shadow: 0 3px 5px rgba(150, 185, 178, 0.4);
`;

const AiButton = styled.button`
  && {
    display: flex;
    align-items: center;
    gap: 3px;
    width: 35px;
    color: ${blue};
  }

  svg:last-child {
    color: ${muted};
  }
`;

const Tools = styled.div`
  display: flex;
  align-items: center;
  color: ${p => (p.$dim ? "#b9b9b9" : ink)};
`;

const Tool = styled.button`
  && {
    display: grid;
    grid-template-columns: 28px ${p => (p.$menu ? "16px" : "")};
    place-items: center;
    height: 32px;
    margin-right: ${p => (p.$menu ? 4 : 0)}px;
  }
`;

const FormatField = styled.label`
  position: relative;
  width: 300px;
  margin: 0 2px 0 3px;

  select {
    width: 100%;
    height: 32px;
    padding: 0 32px 0 7px;
    border: 1px solid ${line};
    border-radius: 4px;
    appearance: none;
  }

  svg {
    position: absolute;
    right: 9px;
    top: 13px;
    pointer-events: none;
  }
`;

const MoreButton = styled.button`
  && {
    margin-left: auto;
  }
`;

const Canvas = styled.div`
  position: relative;
  display: flex;
  flex: 1;
  min-height: 0;
  margin-bottom: 15px;
  padding-left: 80px;
`;

// scrolled a few pixels past its first line
const Page = styled.article`
  flex: 1;
  align-self: flex-start;
  min-width: 0;
  margin: -4px 82px 0 0;
  padding-bottom: 17px;
  background: #cbd6ff;
  clip-path: inset(4px 0 0 0);
  font-family: "Liberation Sans", Arial, sans-serif;
  font-size: 16px;
  line-height: 18px;
  color: #000;

  p {
    margin: 0;
  }
  p + p {
    margin-top: 18px;
  }
`;

const Heading = styled.h2`
  margin: ${p => p.$gap}px 0 0;
  font-size: 20px;
  line-height: 22px;
`;

const SubHeading = styled.h3`
  margin: 18px 0 0;
  font-size: 16px;
  line-height: 18px;
`;

const ScrollTrack = styled.div`
  display: flex;
  flex-direction: column;
  align-items: center;
  flex: none;
  width: 14px;
  padding: 5px 0;
  background: #f4f4f4;
  color: #444;
`;

const ArrowUp = styled.span`
  transform: rotate(180deg);
`;

const Thumb = styled.div`
  width: 8px;
  height: 50px;
  margin: 6px 0 auto;
  border-radius: 4px;
  background: #bbb;
`;

const AiMenus = styled.div`
  position: absolute;
  top: 352px;
  left: 404px;
  display: flex;
  flex-direction: column;
  align-items: flex-end;
  gap: 3px;
  color: #3f4453;
  font-size: 15px;
`;

const FloatBar = styled.div`
  display: flex;
  align-items: center;
  height: 44px;
  padding: 0 7px 2px 18px;
  border-radius: 4px;
  background: #fff;
  box-shadow: 0 1px 6px rgba(30, 40, 90, 0.5);
`;

const FloatButton = styled.button`
  && {
    display: flex;
    align-items: center;
    gap: 6px;
    margin-right: 27px;
  }

  svg {
    color: ${muted};
  }
`;

const Divider = styled.span`
  width: 1px;
  height: 28px;
  margin: 0 8px 0 -12px;
  background: ${line};
`;

const AiMore = styled.button`
  && {
    display: flex;
    align-items: center;
    gap: 5px;
    height: 28px;
    padding: 0 12px 0 8px;
    border-radius: 4px;
    background: #ebf0ff;
    font-size: 13px;
    font-weight: 600;
    color: ${blue};
  }

  svg:last-child {
    margin-left: 5px;
  }
`;

const DropMenu = styled.div`
  display: flex;
  flex-direction: column;
  width: 210px;
  padding: 3px 19px 6px 15px;
  border-radius: 4px;
  background: #fff;
  box-shadow: 0 1px 6px rgba(30, 40, 90, 0.5);
`;

const DropItem = styled.button`
  && {
    display: flex;
    align-items: center;
    height: 29px;
    text-align: left;
  }

  > svg {
    margin-left: auto;
    color: ${muted};
  }
`;

const DropIcon = styled.span`
  display: flex;
  justify-content: center;
  width: 16px;
  margin-right: 5px;
  color: ${muted};
`;

const Footer = styled.footer`
  display: flex;
  align-items: center;
  justify-content: center;
  flex: none;
  height: 44px;
  padding-bottom: 2px;
  font-size: 12px;
`;

const Brand = styled.span`
  font-size: 13px;
  color: ${blue};

  strong {
    font-weight: 600;
  }
  sup {
    font-size: 8px;
    line-height: 8px;
  }
`;

const Version = styled.span`
  margin: 0 15px 0 17px;
`;

const FooterLinks = styled.nav`
  display: flex;

  a {
    line-height: 19px;
    text-decoration: underline;
    text-underline-offset: 2px;
  }
  a + a {
    margin-left: 7px;
    padding-left: 7px;
    border-left: 1px solid #b4b7bd;
  }
`;
